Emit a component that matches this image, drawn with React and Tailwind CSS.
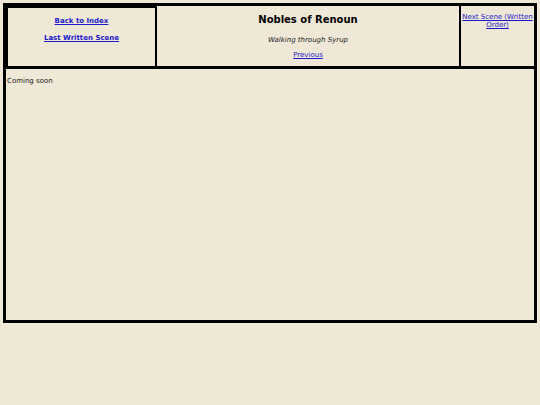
import React from 'react';

const font = { fontFamily: '"DejaVu Sans", Verdana, sans-serif' };

export default function App() {
  return (
    <div className="w-[540px] h-[405px] bg-[#f0e8d6] pt-[3px] pl-[3px]" style={font}>
      <div className="w-[534px] h-[320px] border-[3px] border-black flex flex-col">
        {/* header row */}
        <div className="flex h-[63px] border-b-[3px] border-black">
          <div className="w-[151px] border-2 border-b-0 border-black flex flex-col items-center pt-[9px] gap-[8px]">
            <a href="#" className="text-[7px] leading-[9px] font-bold text-[#1a1acc] underline">Back to Index</a>
            <a href="#" className="text-[7px] leading-[9px] font-bold text-[#1a1acc] underline">Last Written Scene</a>
          </div>
          <div className="flex-1 border-r-2 border-black flex flex-col items-center pt-[7px]">
            <h1 className="text-[10px] leading-[14px] font-bold text-black">Nobles of Renoun</h1>
            <p className="mt-[9px] text-[7px] leading-[9px] italic text-[#222]">Walking through Syrup</p>
            <a href="#" className="mt-[6px] text-[7px] leading-[9px] text-[#1a1acc] underline">Previous</a>
          </div>
          <div className="w-[73px] flex flex-col items-center pt-[7px] text-center">
            <a href="#" className="text-[7px] leading-[8px] text-[#1a1acc] underline">Next Scene (Written Order)</a>
          </div>
        </div>
        {/* body */}
        <div className="flex-1 pt-[8px] pl-[1px]">
          <p className="text-[7px] leading-[9px] text-[#222]">Coming soon</p>
        </div>
      </div>
    </div>
  );
}
